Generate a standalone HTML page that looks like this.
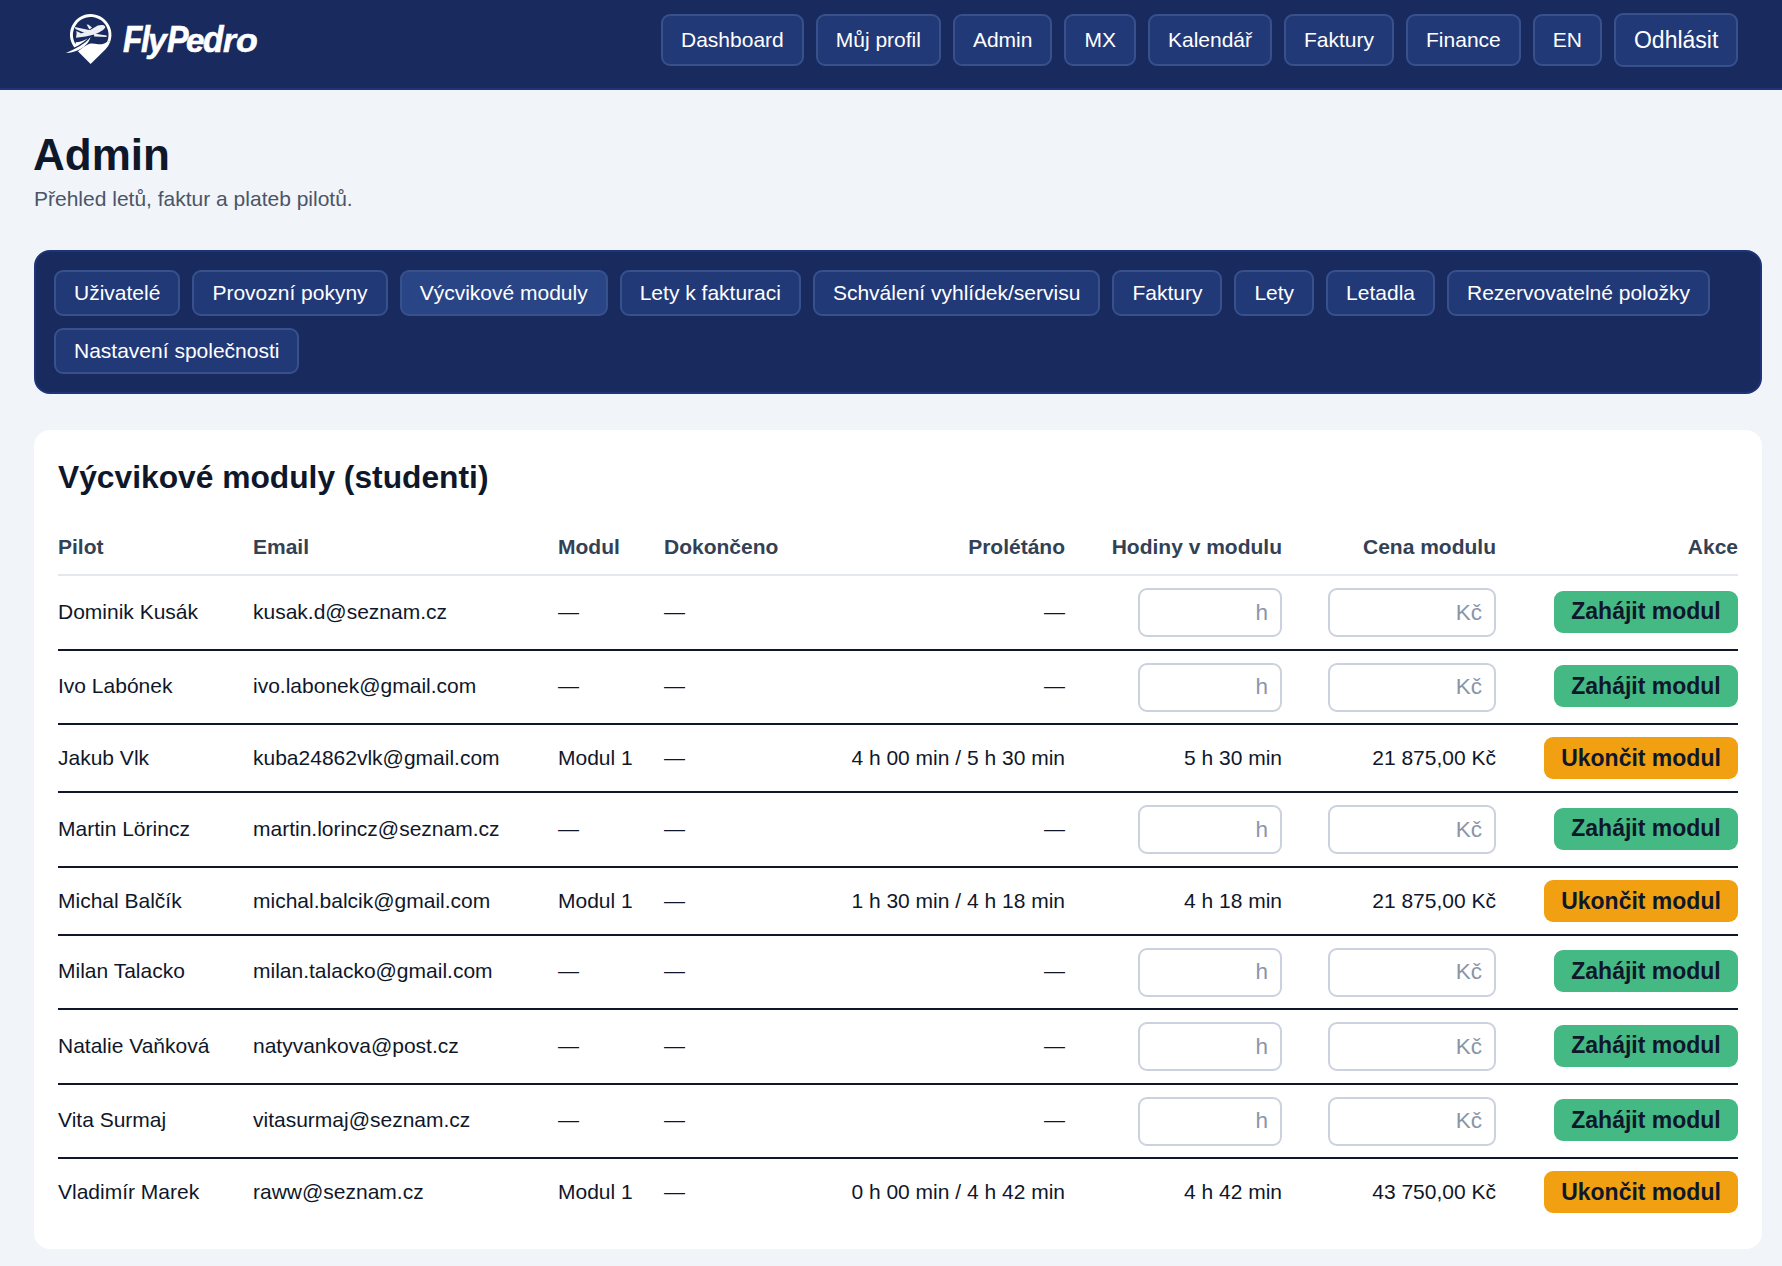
<!DOCTYPE html>
<html><head><meta charset="utf-8">
<style>
*{box-sizing:border-box;margin:0;padding:0}
html,body{width:1782px;height:1266px;overflow:hidden;background:#f1f4f9;font-family:"Liberation Sans",sans-serif;color:#0f172a;position:relative}
.hdr{position:absolute;left:0;top:0;width:1782px;height:90px;background:#192a5f;border-bottom:2px solid #1d3577}
.logo{position:absolute;left:60px;top:8px;width:60px;height:62px}
.brand{position:absolute;left:0;top:20px;width:300px;height:40px}
.brand span{position:absolute;top:0;font-size:36px;font-weight:bold;font-style:italic;color:#fff;line-height:40px;transform-origin:0 32px;-webkit-text-stroke:0.6px #fff}
.nav{position:absolute;top:13px;left:661px;display:flex;gap:12px;align-items:center}
.nb{height:52px;padding:0 18px;border:2px solid #37518c;background:#223977;border-radius:9px;color:#fff;font-size:21px;line-height:48px;white-space:nowrap}
.nb.big{font-size:23px;height:54px;line-height:50px;padding:0 18px;margin-top:0}
h1{position:absolute;left:33px;top:129px;font-size:44px;font-weight:bold;line-height:52px;color:#0f172a;white-space:nowrap}
.sub{position:absolute;left:34px;top:187px;font-size:21px;line-height:24px;color:#4b5567;white-space:nowrap}
.tabs{position:absolute;left:34px;top:250px;width:1728px;height:144px;background:#192a5f;border:2px solid #1d3577;border-radius:16px;padding:18px;display:flex;flex-wrap:wrap;gap:12px;align-content:flex-start}
.tb{height:46px;padding:0 18px;border:2px solid #37518c;background:#223977;border-radius:9px;color:#fff;font-size:21px;line-height:42px;white-space:nowrap}
.tb.act{background:#294585}
.card{position:absolute;left:34px;top:430px;width:1728px;height:819px;background:#fff;border-radius:16px}
.card h2{position:absolute;left:24px;top:29px;font-size:31.75px;font-weight:bold;line-height:36px;white-space:nowrap;color:#0f172a}
.row{position:absolute;left:24px;width:1680px}
.row>div{position:absolute;top:0;height:100%;display:flex;align-items:center;white-space:nowrap;font-size:21px}
.th>div{font-weight:bold;color:#334155;padding-bottom:4px}
.ir>.c1,.ir>.c2,.ir>.c3,.ir>.c4,.ir>.c5{padding-bottom:2px}
.ir>.c8{padding-bottom:2px}
.th{top:94px;height:52px;border-bottom:2px solid #e2e7f0}
.tr{border-bottom:2px solid #0f172a}
.tr.last{border-bottom:none}
.c1{left:0}
.c2{left:195px}
.c3{left:500px}
.c4{left:606px}
.c5{right:673px;justify-content:flex-end}
.c6{right:456px;justify-content:flex-end}
.c7{right:242px;justify-content:flex-end}
.c8{right:0;justify-content:flex-end}
.inp{height:49px;border:2px solid #cbd2de;border-radius:9px;background:#fff;color:#8b95a7;font-size:22.5px;display:flex;align-items:center;justify-content:flex-end;padding-right:12px}
.ih{width:144px}
.ik{width:168px}
.btn{height:42px;border-radius:9px;font-size:23px;font-weight:bold;color:#0f172a;display:flex;align-items:center;justify-content:center}
.g{background:#45b983;width:184px}
.o{background:#f0a010;width:194px}
</style></head><body>
<div class="hdr">
  <svg class="logo" viewBox="60 8 60 62">
    <g fill="#fff">
      <path d="M77.9 51.3 C81.5 48.8 85.5 45.2 89.5 43.8 C92 43 95 43.8 98.2 44.2 C101 44.6 104 44.2 106.4 42.3 C107 41.8 107.3 41.4 107.43 40.89 L110.15 41.88 A20.7 20.7 0 0 1 105.34 49.44 L90.6 63.9 Z"/>
      <path d="M74.3 47.43 A20.7 20.7 0 1 1 110.15 41.88 L107.43 40.89 A17.8 17.8 0 1 0 76.6 45.66 Z"/>
      <path d="M74.1 47.3 C78.5 46 83.5 42.3 87.8 38.5 C83.5 40.6 79.5 42.2 75.9 42.2 Z"/>
      <path d="M65.8 52.8 C70 51.4 76 48.4 80 46.1 C84 43.6 88 40.4 90.6 37 C90 39.6 88 43.2 85 45.8 C80 50 73 53.2 65.8 52.8 Z"/>
      <g fill="#eef0f5">
      <path d="M76 37.7 L76.5 34.4 L84.6 32.4 L91.1 29.4 L97.8 25.6 C99.5 25 101.2 24.8 102.6 25 C104 25.3 105.2 26.2 105.3 27.2 C104.8 28.4 104 29.2 103 29.9 L98.9 32.6 L94.4 34.6 L85.5 36.6 Z"/>
      <path d="M74.9 27 L75.4 29 L84.8 32.9 L92.2 30.5 L87.7 29.7 Z"/>
      <path d="M94 33.4 L106.6 35.4 L106.6 36.9 L94.2 36.4 Z"/>
      <path d="M76.3 31 L81 33.2 L78.7 35.9 L76.8 35.4 Z"/>
      <path d="M86.6 24.5 L88.6 24.7 L92 27.4 L89.4 29.6 Z"/>
      </g>
    </g>
  </svg>
  <div class="brand"><span style="left:122.92px;transform:scale(0.877,1)">F</span><span style="left:141.30px;transform:scale(0.900,1)">l</span><span style="left:148.14px;transform:scale(0.936,0.9)">y</span><span style="left:167.40px;transform:scale(0.896,1)">P</span><span style="left:185.78px;transform:scale(0.922,0.9)">e</span><span style="left:203.26px;transform:scale(0.936,1)">d</span><span style="left:222.57px;transform:scale(0.927,0.9)">r</span><span style="left:235.71px;transform:scale(0.990,0.9)">o</span></div>
  <div class="nav">
    <div class="nb">Dashboard</div><div class="nb">Můj profil</div><div class="nb">Admin</div><div class="nb">MX</div><div class="nb">Kalendář</div><div class="nb">Faktury</div><div class="nb">Finance</div><div class="nb">EN</div><div class="nb big">Odhlásit</div>
  </div>
</div>
<h1>Admin</h1>
<div class="sub">Přehled letů, faktur a plateb pilotů.</div>
<div class="tabs">
  <div class="tb">Uživatelé</div><div class="tb">Provozní pokyny</div><div class="tb act">Výcvikové moduly</div><div class="tb">Lety k fakturaci</div><div class="tb">Schválení vyhlídek/servisu</div><div class="tb">Faktury</div><div class="tb">Lety</div><div class="tb">Letadla</div><div class="tb">Rezervovatelné položky</div><div class="tb">Nastavení společnosti</div>
</div>
<div class="card">
  <h2>Výcvikové moduly (studenti)</h2>
  <!--ROWS-->
  <div class="row th"><div class="c1">Pilot</div><div class="c2">Email</div><div class="c3">Modul</div><div class="c4">Dokončeno</div><div class="c5">Prolétáno</div><div class="c6">Hodiny v modulu</div><div class="c7">Cena modulu</div><div class="c8">Akce</div></div>
  <div class="row tr ir" style="top:146px;height:75px"><div class="c1">Dominik Kusák</div><div class="c2">kusak.d@seznam.cz</div><div class="c3">—</div><div class="c4">—</div><div class="c5">—</div><div class="c6"><div class="inp ih">h</div></div><div class="c7"><div class="inp ik">Kč</div></div><div class="c8"><div class="btn g">Zahájit modul</div></div></div>
  <div class="row tr ir" style="top:221px;height:74px"><div class="c1">Ivo Labónek</div><div class="c2">ivo.labonek@gmail.com</div><div class="c3">—</div><div class="c4">—</div><div class="c5">—</div><div class="c6"><div class="inp ih">h</div></div><div class="c7"><div class="inp ik">Kč</div></div><div class="c8"><div class="btn g">Zahájit modul</div></div></div>
  <div class="row tr" style="top:295px;height:68px"><div class="c1">Jakub Vlk</div><div class="c2">kuba24862vlk@gmail.com</div><div class="c3">Modul 1</div><div class="c4">—</div><div class="c5">4 h 00 min / 5 h 30 min</div><div class="c6">5 h 30 min</div><div class="c7">21 875,00 Kč</div><div class="c8"><div class="btn o">Ukončit modul</div></div></div>
  <div class="row tr ir" style="top:363px;height:75px"><div class="c1">Martin Lörincz</div><div class="c2">martin.lorincz@seznam.cz</div><div class="c3">—</div><div class="c4">—</div><div class="c5">—</div><div class="c6"><div class="inp ih">h</div></div><div class="c7"><div class="inp ik">Kč</div></div><div class="c8"><div class="btn g">Zahájit modul</div></div></div>
  <div class="row tr" style="top:438px;height:68px"><div class="c1">Michal Balčík</div><div class="c2">michal.balcik@gmail.com</div><div class="c3">Modul 1</div><div class="c4">—</div><div class="c5">1 h 30 min / 4 h 18 min</div><div class="c6">4 h 18 min</div><div class="c7">21 875,00 Kč</div><div class="c8"><div class="btn o">Ukončit modul</div></div></div>
  <div class="row tr ir" style="top:506px;height:74px"><div class="c1">Milan Talacko</div><div class="c2">milan.talacko@gmail.com</div><div class="c3">—</div><div class="c4">—</div><div class="c5">—</div><div class="c6"><div class="inp ih">h</div></div><div class="c7"><div class="inp ik">Kč</div></div><div class="c8"><div class="btn g">Zahájit modul</div></div></div>
  <div class="row tr ir" style="top:580px;height:75px"><div class="c1">Natalie Vaňková</div><div class="c2">natyvankova@post.cz</div><div class="c3">—</div><div class="c4">—</div><div class="c5">—</div><div class="c6"><div class="inp ih">h</div></div><div class="c7"><div class="inp ik">Kč</div></div><div class="c8"><div class="btn g">Zahájit modul</div></div></div>
  <div class="row tr ir" style="top:655px;height:74px"><div class="c1">Vita Surmaj</div><div class="c2">vitasurmaj@seznam.cz</div><div class="c3">—</div><div class="c4">—</div><div class="c5">—</div><div class="c6"><div class="inp ih">h</div></div><div class="c7"><div class="inp ik">Kč</div></div><div class="c8"><div class="btn g">Zahájit modul</div></div></div>
  <div class="row tr last" style="top:729px;height:66px"><div class="c1">Vladimír Marek</div><div class="c2">raww@seznam.cz</div><div class="c3">Modul 1</div><div class="c4">—</div><div class="c5">0 h 00 min / 4 h 42 min</div><div class="c6">4 h 42 min</div><div class="c7">43 750,00 Kč</div><div class="c8"><div class="btn o">Ukončit modul</div></div></div>
  <!--/ROWS-->
</div>
</body></html>
